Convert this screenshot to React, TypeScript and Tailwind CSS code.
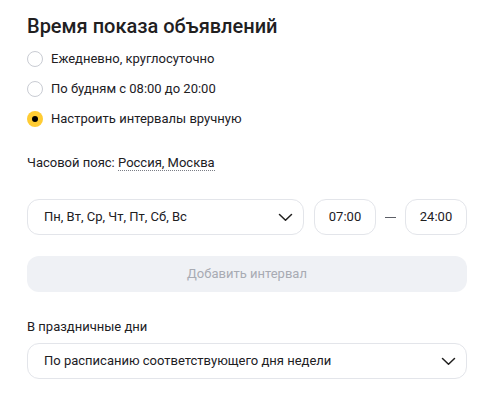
const font = { fontFamily: '"Roboto", "Noto Sans", sans-serif' };

function Chevron() {
  return (
    <svg width="15" height="9" viewBox="0 0 15 9" fill="none" className="shrink-0">
      <path d="M1.5 1.5 7.5 7.2l6-5.7" stroke="#21201f" strokeWidth="1.5" strokeLinecap="round" strokeLinejoin="round" />
    </svg>
  );
}

function Radio({ label, checked }: { label: string; checked?: boolean }) {
  return (
    <label className="flex items-center gap-2 h-[30px] cursor-pointer">
      {checked ? (
        <span className="w-4 h-4 rounded-full bg-[#fc3] flex items-center justify-center">
          <span className="w-[6px] h-[6px] rounded-full bg-black" />
        </span>
      ) : (
        <span className="w-4 h-4 rounded-full border border-[#c9ccd3] bg-white" />
      )}
      <span className="text-[13px] text-[#21201f]">{label}</span>
    </label>
  );
}

export default function App() {
  return (
    <div className="w-[484px] h-[404px] bg-white pl-[27px] pr-[17px] pt-[12px]" style={font}>
      <h1 className="text-[20px] font-medium leading-[28px] text-[#21201f]">Время показа объявлений</h1>

      {/* Варианты показа */}
      <div className="mt-[4px] flex flex-col">
        <Radio label="Ежедневно, круглосуточно" />
        <Radio label="По будням с 08:00 до 20:00" />
        <Radio label="Настроить интервалы вручную" checked />
      </div>

      <div className="mt-[20px] text-[13px] text-[#21201f] leading-[18px]">
        Часовой пояс:{' '}
        <span className="border-b border-dotted border-[#7a7d85]">Россия, Москва</span>
      </div>

      <div className="mt-[27px] flex items-center">
        <div className="flex-1 h-9 rounded-xl border border-[#e3e5ea] flex items-center justify-between pl-4 pr-[10px]">
          <span className="text-[13px] text-[#21201f]">Пн, Вт, Ср, Чт, Пт, Сб, Вс</span>
          <Chevron />
        </div>
        <div className="ml-[10px] w-[62px] h-9 rounded-xl border border-[#e3e5ea] flex items-center justify-center text-[13px] text-[#21201f]">
          07:00
        </div>
        <span className="w-[29px] flex justify-center">
          <span className="w-[11px] h-px bg-[#5c5e66]" />
        </span>
        <div className="w-[62px] h-9 rounded-xl border border-[#e3e5ea] flex items-center justify-center text-[13px] text-[#21201f]">
          24:00
        </div>
      </div>

      <button className="mt-[21px] w-full h-9 rounded-xl bg-[#eff1f5] text-[13px] text-[#a8abb3]">
        Добавить интервал
      </button>

      <div className="mt-[26px] text-[13px] text-[#21201f] leading-[18px]">В праздничные дни</div>
      <div className="mt-[7px] w-full h-9 rounded-xl border border-[#e3e5ea] flex items-center justify-between pl-4 pr-[10px]">
        <span className="text-[13px] text-[#21201f]">По расписанию соответствующего дня недели</span>
        <Chevron />
      </div>
    </div>
  );
}
